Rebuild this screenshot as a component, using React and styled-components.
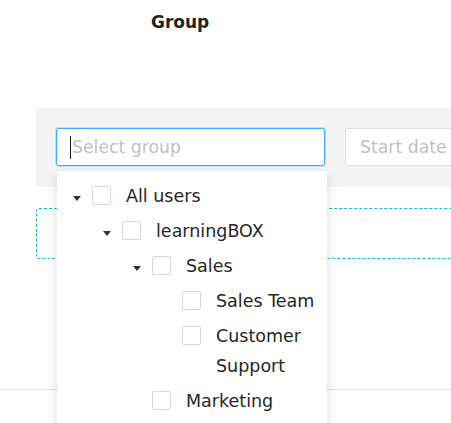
import React from "react";
import styled, { createGlobalStyle } from "styled-components";

const GlobalStyle = createGlobalStyle`
  html, body {
    margin: 0;
    padding: 0;
    background: #fff;
    overflow: hidden;
  }
  body {
    font-family: "DejaVu Sans", Verdana, sans-serif;
    color: rgba(0, 0, 0, 0.85);
  }
`;

const Page = styled.div`
  position: relative;
  width: 451px;
  height: 423px;
  overflow: hidden;
`;

const Header = styled.div`
  height: 108px;
  box-sizing: border-box;
  padding: 11px 0 0 151px;
`;

const Title = styled.h2`
  margin: 0;
  font-size: 17px;
  line-height: 22px;
  font-weight: 700;
  color: #222;
`;

const FilterBar = styled.div`
  position: relative;
  margin-left: 36px;
  width: 640px;
  background: #f4f4f5;
  padding: 20px 20px 21px;
  box-sizing: border-box;
  display: flex;
  gap: 20px;
`;

const Field = styled.div`
  position: relative;
  width: ${props => props.width}px;
  height: 38px;
  box-sizing: border-box;
  background: #fff;
  border: 1px solid ${props => (props.focused ? "#40a9ff" : "#e0e0e0")};
  box-shadow: ${props =>
    props.focused ? "0 0 0 1px rgba(64, 169, 255, 0.25)" : "none"};
  border-radius: 3px;
  display: flex;
  align-items: center;
  padding-left: 13px;
  font-size: 17.3px;
`;

const Cursor = styled.span`
  width: 1px;
  height: 23px;
  background: #111;
  margin-right: 1px;
`;

const Placeholder = styled.span`
  color: #bfbfbf;
  padding-left: ${props => props.offset || 0}px;
  white-space: nowrap;
`;

const Dropdown = styled.div`
  position: absolute;
  top: 42px;
  left: 0;
  width: 270px;
  height: 300px;
  background: #fff;
  box-shadow: 0 3px 10px rgba(0, 0, 0, 0.14);
  padding: 10px 5px 0 5px;
  box-sizing: border-box;
  z-index: 2;
`;

const Node = styled.div`
  display: flex;
  align-items: flex-start;
  padding-left: ${props => props.level * 30}px;
  margin-bottom: 5px;
  font-size: 17.5px;
  line-height: 30px;
  color: #262626;
`;

const Switcher = styled.span`
  flex: none;
  width: 30px;
  height: 30px;
  display: flex;
  align-items: center;
  justify-content: center;

  &::after {
    content: "";
    display: ${props => (props.open ? "block" : "none")};
    margin-top: 5px;
    border-left: 4px solid transparent;
    border-right: 4px solid transparent;
    border-top: 5px solid #333;
  }
`;

const Checkbox = styled.span`
  flex: none;
  width: 19px;
  height: 19px;
  margin-top: 5px;
  box-sizing: border-box;
  border: 1px solid #d9d9d9;
  border-radius: 2px;
  background: #fff;
`;

const Label = styled.span`
  flex: 1;
  margin-left: 15px;
  padding-right: 4px;
`;

const DashedBox = styled.div`
  margin: 21px 0 0 36px;
  width: 640px;
  height: 51px;
  box-sizing: border-box;
  border: 1px dashed #1ab2e0;
  border-radius: 3px;
`;

const Divider = styled.div`
  margin-top: 130px;
  height: 1px;
  background: #e4e4e4;
`;

const tree = [
  { label: "All users", level: 0, open: true },
  { label: "learningBOX", level: 1, open: true },
  { label: "Sales", level: 2, open: true },
  { label: "Sales Team", level: 3 },
  { label: "Customer Support", level: 3 },
  { label: "Marketing", level: 2 },
];

function GroupTree() {
  return (
    <Dropdown>
      {tree.map(node => (
        <Node key={node.label} level={node.level}>
          <Switcher open={node.open} />
          <Checkbox />
          <Label>{node.label}</Label>
        </Node>
      ))}
    </Dropdown>
  );
}

export default function App() {
  return (
    <Page>
      <GlobalStyle />
      <Header>
        <Title>Group</Title>
      </Header>
      <FilterBar>
        <Field width={269} focused>
          <Cursor />
          <Placeholder>Select group</Placeholder>
          <GroupTree />
        </Field>
        <Field width={240}>
          <Placeholder offset={1}>Start date</Placeholder>
        </Field>
      </FilterBar>
      <DashedBox />
      <Divider />
    </Page>
  );
}
